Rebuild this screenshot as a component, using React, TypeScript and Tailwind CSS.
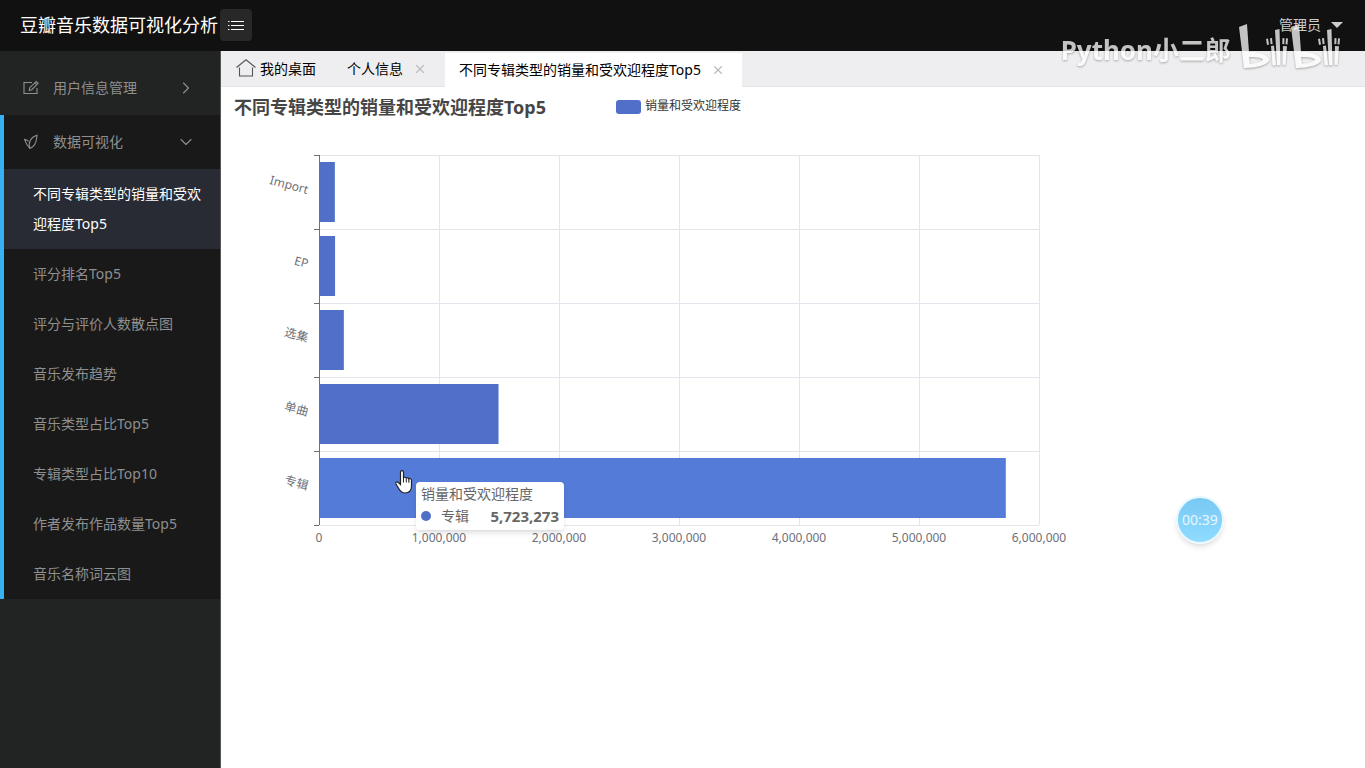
import { ChevronDown, ChevronRight, X } from 'lucide-react';

const chartItems = [
  '评分排名Top5',
  '评分与评价人数散点图',
  '音乐发布趋势',
  '音乐类型占比Top5',
  '专辑类型占比Top10',
  '作者发布作品数量Top5',
  '音乐名称词云图',
];

const bars = [
  { name: 'Import', value: 132000 },
  { name: 'EP', value: 134000 },
  { name: '选集', value: 207000 },
  { name: '单曲', value: 1496000 },
  { name: '专辑', value: 5723273 },
];

const ticks = [0, 1, 2, 3, 4, 5, 6];

// plot area inside the svg
const LEFT = 98;
const TOP = 68;
const STEP = 120;
const BAND = 74;

const EditIcon = () => (
  <svg className="h-4 w-4" viewBox="0 0 16 16" fill="none" stroke="currentColor" strokeWidth="1.1">
    <path d="M9 2.5H1v11h13V8" />
    <path d="M6.2 10.5l.6-2.8 6.4-6.3 1.9 1.9-6.3 6.4zM11.8 2.8l1.9 1.9" />
  </svg>
);

const LeafIcon = () => (
  <svg className="h-4 w-4" viewBox="0 0 16 16" fill="none" stroke="currentColor" strokeWidth="1.1">
    <path d="M7 14.5C5 10.5 6.5 3.5 14 1.3c-.6 2.6.6 9.7-7 13.2z" />
    <path d="M6.6 14.2C4 11.5 2.6 8.8 1.6 5.4c1.8.2 2.8.8 4 2" />
  </svg>
);

const HomeIcon = () => (
  <svg className="h-5 w-5" viewBox="0 0 20 20" fill="none" stroke="#555" strokeWidth="1.1">
    <path d="M.5 8.5L10 .8l9.500 7.700M3.500 8.500v8.500h13V8.500" />
  </svg>
);

const BiliHalf = () => (
  <>
    <path
      fillRule="evenodd"
      d="M0 3L8 0l2 28c10-1 20 4 20 8 0 5-14 8-25 8zM10 33l1 7c6-.5 13-3 13-4.500s-7-3-14-2.500z"
    />
    <path d="M27 15l2-.4 1 6-2 .4zM31 14.300l2-.3.6 6-2 .3zM32 22l3-.5 2 19.500-3.500.500zM36 6l4.500-1 1 36-3.500.3zM43.500 14l2 .2-.2 6-2-.1zM47 14.300l2 .2-.5 6-2-.2zM44 22l4 .3L46.500 41l-3-.3z" />
  </>
);

const Watermark = () => (
  <div className="pointer-events-none absolute top-6 right-6 flex gap-2 text-white opacity-75 drop-shadow-[0_1px_1px_rgba(0,0,0,0.4)]">
    <span className="mt-2 text-[26px] leading-9 font-bold">Python小二郎</span>
    <svg className="h-11 w-[102px]" viewBox="0 0 102 44" fill="currentColor">
      <BiliHalf />
      <g transform="translate(52 0)">
        <BiliHalf />
      </g>
    </svg>
  </div>
);

const Header = () => (
  <header className="flex h-[51px] items-center bg-[#111] pr-[22px] pb-px pl-5 text-white">
    <h1 className="text-lg whitespace-nowrap">豆瓣音乐数据可视化分析</h1>
    <button
      type="button"
      aria-label="菜单"
      className="ml-0.5 flex h-8 w-8 items-center justify-center rounded-sm bg-[#282828]"
    >
      <svg className="h-4 w-4" viewBox="0 0 16 16" stroke="#fff" strokeWidth="1">
        <path d="M0 4.500h1.500M3 4.500H16M0 8.500h1.500M3 8.500H16M0 12.500h1.500M3 12.500H16" />
      </svg>
    </button>
    <button type="button" className="ml-auto flex items-center gap-[10px] text-sm text-[#ccc]">
      管理员
      <span className="border-x-6 border-t-6 border-x-transparent border-t-[#ccc]" />
    </button>
  </header>
);

const Sidebar = () => (
  <nav className="w-[221px] shrink-0 border-r border-[#555] bg-[#222423] pt-[10px] text-sm text-[#8f8f8f]">
    <button type="button" className="flex h-[54px] w-full items-center pr-6 pl-[23px]">
      <EditIcon />
      <span className="ml-[14px]">用户信息管理</span>
      <ChevronRight className="ml-auto h-5 w-5" strokeWidth={1.3} />
    </button>
    <div className="border-l-4 border-[#38b0f4] bg-[#191919]">
      <button type="button" className="flex h-[54px] w-full items-center pr-6 pl-[19px]">
        <LeafIcon />
        <span className="ml-[14px]">数据可视化</span>
        <ChevronDown className="ml-auto h-5 w-5" strokeWidth={1.3} />
      </button>
      <ul>
        <li>
          <a href="#top5" className="block bg-[#282b33] py-[10px] pr-3 pl-[29px] leading-[30px] text-white">
            不同专辑类型的销量和受欢迎程度Top5
          </a>
        </li>
        {chartItems.map((item) => (
          <li key={item}>
            <a href={`#${item}`} className="block py-[10px] pl-[29px] leading-[30px]">
              {item}
            </a>
          </li>
        ))}
      </ul>
    </div>
  </nav>
);

const Tabs = () => (
  <div className="flex h-9 items-end border-b border-[#e4e4e6] bg-[#eeeef0] text-sm text-black">
    <a href="#home" className="flex h-[34px] items-center gap-1 px-[15px]">
      <HomeIcon />
      我的桌面
    </a>
    <div className="flex h-[34px] items-center gap-[10px] pr-[18px] pl-4">
      <a href="#profile">个人信息</a>
      <button type="button" aria-label="关闭个人信息">
        <X className="h-[14px] w-[14px] text-[#bbb]" strokeWidth={2} />
      </button>
    </div>
    <div className="-mb-px flex h-[34px] items-center gap-[10px] bg-white pr-[17px] pl-[14px]">
      <a href="#top5">不同专辑类型的销量和受欢迎程度Top5</a>
      <button type="button" aria-label="关闭当前标签">
        <X className="h-[14px] w-[14px] text-[#bbb]" strokeWidth={2} />
      </button>
    </div>
  </div>
);

const BarChart = () => (
  <section className="relative">
    <svg className="block h-[480px] w-[880px]" viewBox="0 0 880 480">
      <text x="13" y="27" fontSize="18" fontWeight="700" fill="#464646">
        不同专辑类型的销量和受欢迎程度Top5
      </text>
      <rect x="395" y="13" width="25" height="14" rx="3" fill="#5070c8" />
      <text x="424" y="23" fontSize="12" fill="#333">
        销量和受欢迎程度
      </text>

      <g stroke="#e0e6ec" shapeRendering="crispEdges">
        {ticks.map((t) => (
          <line key={t} x1={LEFT + t * STEP} x2={LEFT + t * STEP} y1={TOP} y2={TOP + BAND * 5} />
        ))}
        {bars.map((b, i) => (
          <line key={b.name} x1={LEFT} x2={LEFT + STEP * 6} y1={TOP + i * BAND} y2={TOP + i * BAND} />
        ))}
        <line x1={LEFT} x2={LEFT + STEP * 6} y1={TOP + BAND * 5} y2={TOP + BAND * 5} />
      </g>

      {bars.map((b, i) => (
        <rect
          key={b.name}
          x={LEFT}
          y={TOP + i * BAND + 7}
          width={(b.value / 1000000) * STEP}
          height="60"
          fill={i === 4 ? '#557bd8' : '#5070c8'}
        />
      ))}

      <g stroke="#6e7079" shapeRendering="crispEdges">
        <line x1={LEFT} x2={LEFT} y1={TOP} y2={TOP + BAND * 5} />
        {[0, 1, 2, 3, 4, 5].map((i) => (
          <line key={i} x1={LEFT - 5} x2={LEFT} y1={TOP + i * BAND} y2={TOP + i * BAND} />
        ))}
      </g>

      <g fontSize="12" fill="#6e7079">
        {bars.map((b, i) => (
          <text
            key={b.name}
            textAnchor="end"
            transform={`translate(${LEFT - 12} ${TOP + i * BAND + 39}) rotate(15)`}
          >
            {b.name}
          </text>
        ))}
        {ticks.map((t) => (
          <text key={t} x={LEFT + t * STEP} y="455" textAnchor="middle">
            {(t * 1000000).toLocaleString('en-US')}
          </text>
        ))}
      </g>
    </svg>

    <div className="absolute top-[395px] left-[195px] w-[148px] rounded bg-white px-[5px] pt-px pb-[3px] text-sm leading-[22px] text-[#666] shadow-md">
      <p>销量和受欢迎程度</p>
      <p className="flex items-center">
        <span className="mr-[10px] h-[10px] w-[10px] rounded-full bg-[#5070c8]" />
        专辑
        <b className="ml-auto text-[15px]">5,723,273</b>
      </p>
    </div>

    <svg className="absolute top-[383px] left-[173px] h-6 w-5" viewBox="0 0 20 24">
      <path
        d="M6.500 2.200c0-2 3-2 3 0v6c.4-1.400 2.700-1.200 2.800.4.500-1.200 2.500-.9 2.600.6.600-.9 2.600-.6 2.600 1.100V16c0 4-2.200 7-6.500 7-3 0-4.500-1.500-6-4l-3-5c-1-1.800 1-2.900 2.400-1.500l2.100 2z"
        fill="#fff"
        stroke="#222"
        strokeWidth="1.200"
      />
      <path d="M9.500 8v4.500M12.300 9v3.500M14.900 9.800v3" stroke="#222" fill="none" />
    </svg>
  </section>
);

export default function App() {
  return (
    <div className="relative flex min-h-screen flex-col overflow-hidden bg-white font-['Noto_Sans','Noto_Sans_CJK_SC',sans-serif]">
      <Header />
      <div className="flex flex-1">
        <Sidebar />
        <main className="min-w-0 flex-1">
          <Tabs />
          <BarChart />
        </main>
      </div>
      <Watermark />
      <div className="absolute right-[141px] bottom-[224px] flex h-12 w-12 items-center justify-center rounded-full border-2 border-[#e8f8ff] bg-linear-to-b from-[#78c8f4] to-[#90dcff] text-sm text-white/80 shadow-md">
        00:39
      </div>
    </div>
  );
}
